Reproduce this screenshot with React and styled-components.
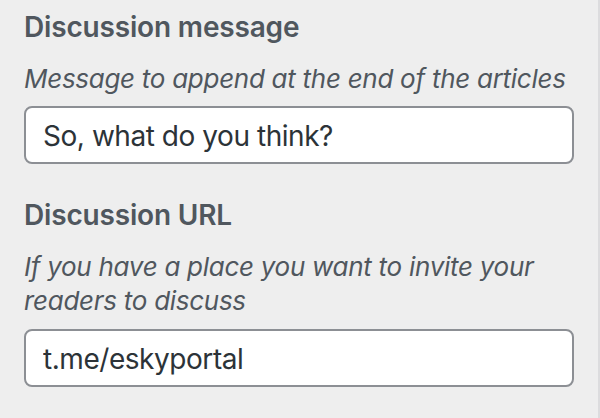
import React from "react";
import styled, { createGlobalStyle } from "styled-components";

const Global = createGlobalStyle`
  html, body { margin: 0; padding: 0; background: #eeeeee; }
  body { font-family: Inter, "Noto Sans", sans-serif; }
  * { box-sizing: border-box; }
`;

const Panel = styled.div`
  width: 600px;
  height: 418px;
  padding: 7px 0 0 24px;
  background: #eeeeee;
  border-right: 2px solid #dcdcde;
  overflow: hidden;
`;

const Control = styled.div`
  display: flex;
  flex-direction: column;
  margin-bottom: 31px;
`;

const Title = styled.h3`
  margin: 0;
  font-family: Inter, "Noto Sans", sans-serif;
  font-weight: 600;
  font-size: 28px;
  line-height: 40px;
  letter-spacing: -0.17px;
  color: #50575e;
`;

const Description = styled.p`
  margin: 15px 0 0;
  width: 560px;
  font-family: Inter, "Noto Sans", sans-serif;
  font-style: italic;
  font-size: 26px;
  line-height: 34px;
  letter-spacing: -0.28px;
  color: #50575e;
`;

const Input = styled.input`
  display: block;
  margin-top: ${(p) => p.$gap}px;
  width: 550px;
  height: 58px;
  padding: 2px 17px 0;
  border: 2px solid #8c8f94;
  border-radius: 8px;
  background: #fff;
  font-family: Inter, "Noto Sans", sans-serif;
  font-size: 28px;
  letter-spacing: -0.45px;
  color: #2c3338;
  outline: none;
`;

export default function App() {
  return (
    <>
      <Global />
      <Panel>
        <Control>
          <Title>Discussion message</Title>
          <Description>Message to append at the end of the articles</Description>
          <Input $gap={10} defaultValue="So, what do you think?" />
        </Control>
        <Control>
          <Title>Discussion URL</Title>
          <Description>If you have a place you want to invite your readers to discuss</Description>
          <Input $gap={11} defaultValue="t.me/eskyportal" />
        </Control>
      </Panel>
    </>
  );
}
